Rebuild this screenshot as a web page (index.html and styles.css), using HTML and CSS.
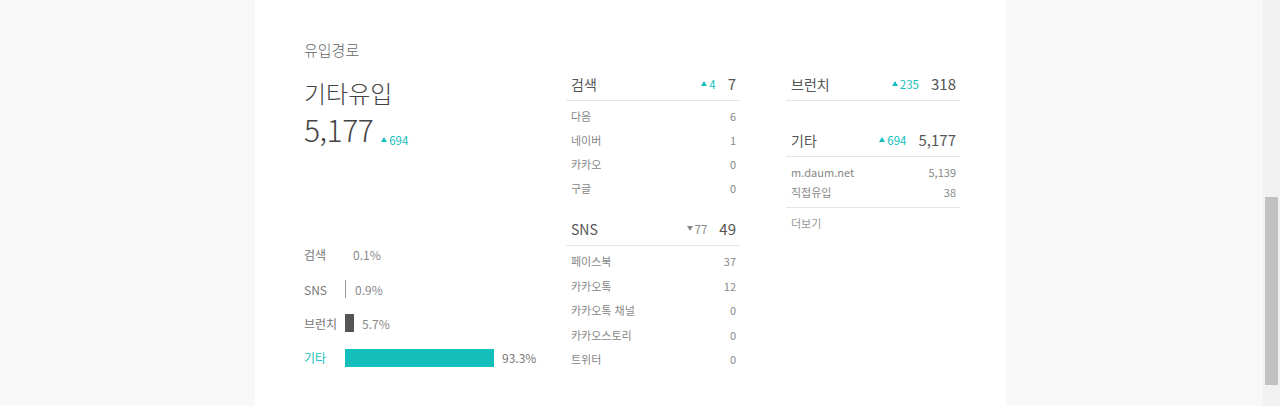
FILE: index.html
```html
<!DOCTYPE html>
<html lang="ko">
<head>
<meta charset="utf-8">
<title>유입경로</title>
<link rel="stylesheet" href="styles.css">
</head>
<body>
<div class="panel">
  <div class="cols">
    <section class="summary">
      <h2 class="title">유입경로</h2>
      <div class="main-name">기타유입</div>
      <div class="main-num"><span class="big">5,177</span><span class="delta up"><i class="tri-up"></i>694</span></div>
      <ul class="bars">
        <li class="bar-row"><span class="bar-label">검색</span><span class="bar none" style="width:0px"></span><span class="pct">0.1%</span></li>
        <li class="bar-row"><span class="bar-label">SNS</span><span class="bar thin" style="width:1px"></span><span class="pct">0.9%</span></li>
        <li class="bar-row"><span class="bar-label">브런치</span><span class="bar dark" style="width:9px"></span><span class="pct">5.7%</span></li>
        <li class="bar-row active"><span class="bar-label">기타</span><span class="bar teal" style="width:149px"></span><span class="pct">93.3%</span></li>
      </ul>
    </section>

    <section class="group">
      <div class="g-head"><span class="g-name">검색</span><span class="delta up"><i class="tri-up"></i>4</span><span class="g-val">7</span></div>
      <ul class="g-list">
        <li><span>다음</span><span>6</span></li>
        <li><span>네이버</span><span>1</span></li>
        <li><span>카카오</span><span>0</span></li>
        <li><span>구글</span><span>0</span></li>
      </ul>
      <div class="g-head second"><span class="g-name">SNS</span><span class="delta down"><i class="tri-down"></i>77</span><span class="g-val">49</span></div>
      <ul class="g-list tall">
        <li><span>페이스북</span><span>37</span></li>
        <li><span>카카오톡</span><span>12</span></li>
        <li><span>카카오톡 채널</span><span>0</span></li>
        <li><span>카카오스토리</span><span>0</span></li>
        <li><span>트위터</span><span>0</span></li>
      </ul>
    </section>

    <section class="group">
      <div class="g-head"><span class="g-name">브런치</span><span class="delta up"><i class="tri-up"></i>235</span><span class="g-val">318</span></div>
      <div class="g-head third"><span class="g-name">기타</span><span class="delta up"><i class="tri-up"></i>694</span><span class="g-val">5,177</span></div>
      <ul class="g-list small">
        <li><span>m.daum.net</span><span>5,139</span></li>
        <li><span>직접유입</span><span>38</span></li>
      </ul>
      <div class="more">더보기</div>
    </section>
  </div>
</div>
<div class="scrollbar"><div class="thumb"></div></div>
</body>
</html>
```

FILE: styles.css
```css
* { box-sizing: border-box; }
html, body { margin: 0; padding: 0; }
body {
  background: #f8f8f8;
  font-family: "Noto Sans CJK KR", "Noto Sans", sans-serif;
  color: #333;
  height: 406px;
  overflow: hidden;
}
ul { list-style: none; margin: 0; padding: 0; }
h2 { margin: 0; font-weight: normal; }

.panel {
  margin-left: 255px;
  width: 751px;
  height: 406px;
  background: #fff;
  padding: 38px 46px 0 49px;
}
.cols { display: flex; }

.summary { width: 262px; }
.title { font-size: 15px; color: #666; line-height: 24px; font-weight: 300; }
.main-name { margin-top: 14px; font-size: 24px; line-height: 34px; color: #444; font-weight: 300; }
.main-num { display: flex; align-items: baseline; line-height: 38px; }
.big { font-size: 30px; font-weight: 300; color: #444; letter-spacing: -0.5px; }
.main-num .delta { margin-left: 8px; }

.delta { font-size: 11.5px; display: inline-flex; align-items: center; }
.delta.up { color: #14bfbb; }
.delta.down { color: #888; }
.tri-up, .tri-down { display: inline-block; width: 0; height: 0; border-left: 3px solid transparent; border-right: 3px solid transparent; margin-right: 2px; }
.tri-up { border-bottom: 5px solid #14bfbb; }
.tri-down { border-top: 5px solid #888; }

.bars { margin-top: 79px; }
.bar-row { display: flex; align-items: center; height: 34.4px; font-size: 12px; color: #777; }
.bar-label { width: 41px; font-size: 12px; color: #777; }
.bar { height: 18px; margin-right: 8px; }
.bar.none { margin-right: 8px; }
.bar.thin { border-left: 1px solid #999; height: 18px; width: 2px !important; }
.bar.dark { background: #555; }
.bar.teal { background: #14bfbb; }
.pct { font-size: 12px; color: #888; }
.bar-row.active .bar-label { color: #14bfbb; }
.bar-row.active .pct { color: #777; }

.group { width: 174px; margin-top: 29px; }
.group + .group { margin-left: 46px; }
.g-head {
  display: flex; align-items: center; height: 34px;
  padding: 0 4px 0 5px; border-bottom: 1px solid #e6e6e6;
}
.g-name { flex: 1; font-size: 14px; color: #555; }
.g-head .delta { margin-right: 12px; }
.g-val { font-size: 15px; color: #555; }
.g-head.second { margin-top: 12px; }
.g-head.third { margin-top: 22px; }
.g-list { padding: 3px 4px 0 5px; }
.g-list li { display: flex; justify-content: space-between; height: 24px; align-items: center; font-size: 11px; color: #888; }
.g-list.tall li { height: 24.5px; }
.g-list.small { padding-top: 5px; padding-bottom: 5px; border-bottom: 1px solid #e6e6e6; }
.g-list.small li { height: 20px; }
.more { font-size: 11px; color: #999; padding: 7px 5px; }

.scrollbar { position: fixed; right: 0; top: 0; width: 17px; height: 406px; background: #f1f1f1; }
.thumb { position: absolute; left: 2px; top: 197px; width: 13px; height: 188px; background: #c1c1c1; }
```
